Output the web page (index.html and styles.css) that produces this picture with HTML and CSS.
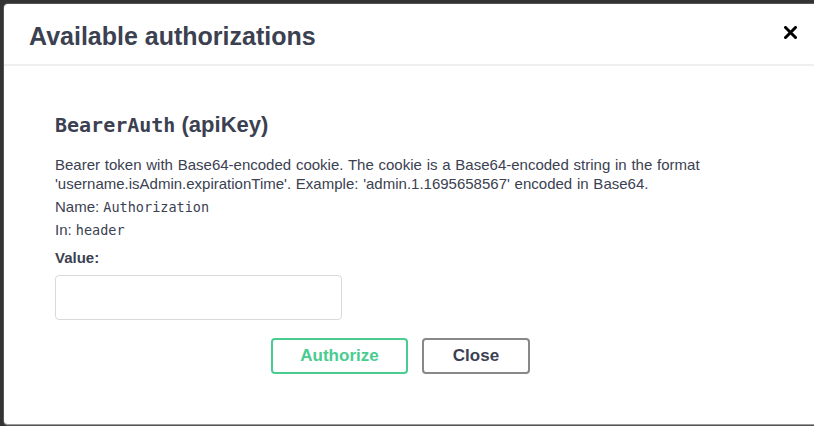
FILE: index.html
```html
<!DOCTYPE html>
<html lang="en">
<head>
<meta charset="utf-8">
<title>Available authorizations</title>
<link rel="stylesheet" href="styles.css">
</head>
<body>
<div class="modal">
  <div class="modal-header">
    <h3 class="modal-title">Available authorizations</h3>
    <button class="close-x" aria-label="Close">
      <svg width="13" height="13" viewBox="0 0 13 13"><path d="M1.5 1.5 L11.5 11.5 M11.5 1.5 L1.5 11.5" stroke="#000" stroke-width="3" stroke-linecap="square" fill="none"/></svg>
    </button>
  </div>
  <div class="modal-content">
    <h4 class="auth-name"><code>BearerAuth</code> (apiKey)</h4>
    <p class="desc">Bearer token with Base64-encoded cookie. The cookie is a Base64-encoded string in the format 'username.isAdmin.expirationTime'. Example: 'admin.1.1695658567' encoded in Base64.</p>
    <p class="row row-name">Name: <code>Authorization</code></p>
    <p class="row row-in">In: <code>header</code></p>
    <label class="value-label">Value:</label>
    <input class="value-input" type="text">
    <div class="btn-row">
      <button class="btn btn-authorize">Authorize</button>
      <button class="btn btn-close">Close</button>
    </div>
  </div>
</div>
</body>
</html>
```
FILE: styles.css
```css
html, body {
  margin: 0;
  padding: 0;
  height: 100%;
  overflow: hidden;
}
body {
  background: #333333;
  font-family: "Liberation Sans", Arial, sans-serif;
  color: #3b4151;
}
.modal {
  margin: 4px 0 0 4px;
  width: 818px;
  height: 420px;
  background: #fff;
  border-radius: 4px;
  border-bottom: 1px solid #9a9a9a;
  box-shadow: 0 0 0 1px #555;
}
.modal-header {
  display: flex;
  justify-content: space-between;
  align-items: center;
  padding: 17px 25px 13px 25px;
  border-bottom: 2px solid #efefef;
}
.modal-title {
  margin: 0;
  font-size: 25px;
  line-height: 30px;
  font-weight: bold;
  color: #3b4151;
}
.close-x {
  border: 0;
  background: none;
  padding: 0;
  margin: 0 0 7px 0;
  width: 13px;
  height: 13px;
  display: block;
}
.close-x svg { display: block; }
.modal-content {
  padding: 47px 0 0 51px;
}
.auth-name {
  margin: 0;
  font-size: 22px;
  line-height: 24px;
  font-weight: bold;
  color: #3b4151;
}
.auth-name code {
  font-family: "DejaVu Sans Mono", monospace;
  font-size: 20px;
  font-weight: bold;
}
.desc {
  margin: 18px 0 0 0;
  font-size: 15px;
  line-height: 19px;
  width: 700px;
  word-spacing: 0.6px;
}
.row {
  font-size: 15px;
  line-height: 19px;
}
.row-name { margin: 4px 0 0 0; }
.row-in { margin: 3px 0 0 0; }
.row code {
  font-family: "DejaVu Sans Mono", monospace;
  font-size: 13.5px;
}
.value-label {
  display: block;
  margin-top: 8px;
  font-size: 15px;
  line-height: 19px;
  font-weight: bold;
}
.value-input {
  display: block;
  box-sizing: border-box;
  margin-top: 8px;
  width: 287px;
  height: 45px;
  border: 1px solid #d9d9d9;
  border-radius: 4px;
  background: #fff;
}
.btn-row {
  display: flex;
  gap: 14px;
  margin-top: 18px;
  padding-left: 216px;
}
.btn {
  box-sizing: border-box;
  height: 36px;
  border-radius: 4px;
  background: #fff;
  font-family: "Liberation Sans", Arial, sans-serif;
  font-size: 17px;
  font-weight: bold;
  padding: 0;
}
.btn-authorize {
  width: 137px;
  border: 2px solid #49cc90;
  color: #49cc90;
}
.btn-close {
  width: 108px;
  border: 2px solid #888888;
  color: #3b4151;
}
```
